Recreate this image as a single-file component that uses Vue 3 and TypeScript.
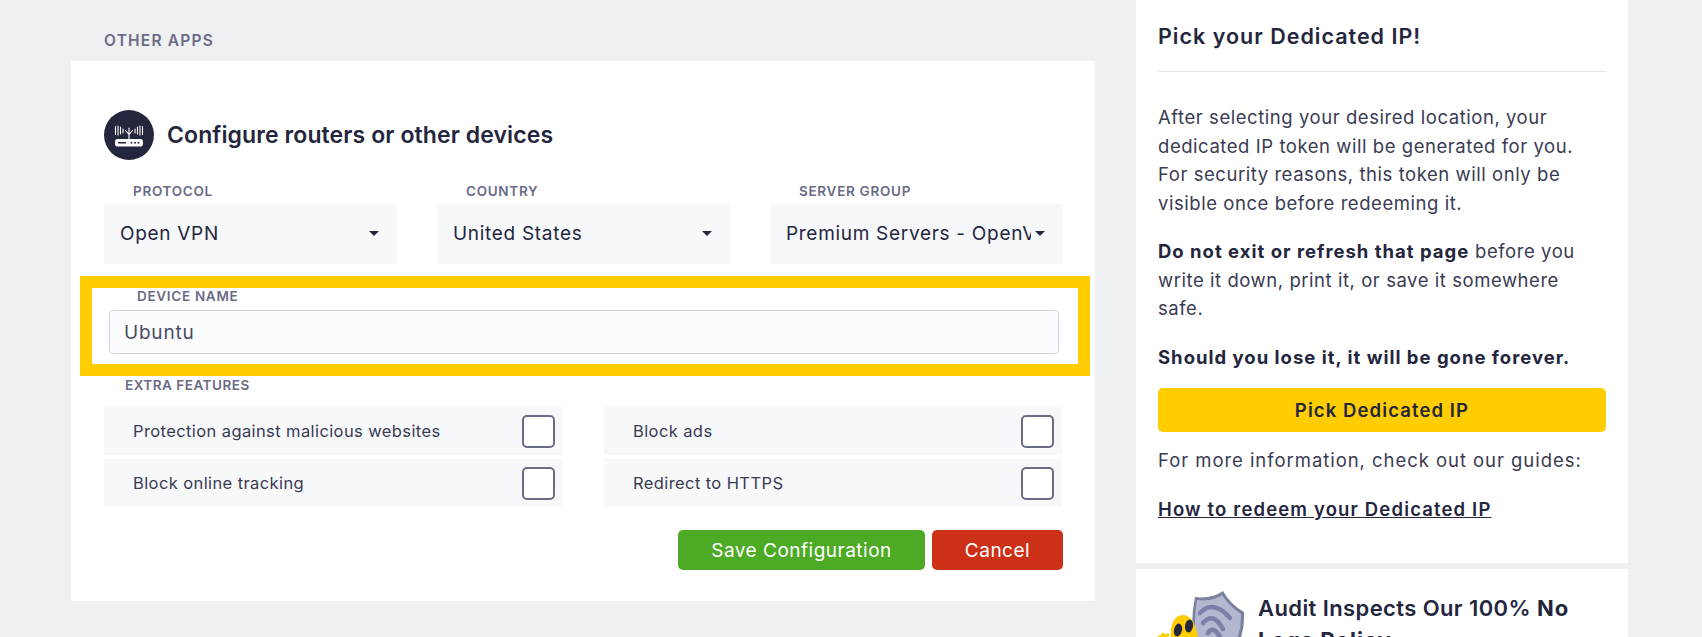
<script setup lang="ts">
import { ref } from 'vue'

const protocol = ref('Open VPN')
const country = ref('United States')
const serverGroup = ref('Premium Servers - OpenVPN')
const deviceName = ref('Ubuntu')

const selects = [
  { label: 'Protocol', model: protocol, options: ['Open VPN', 'IKEv2'] },
  { label: 'Country', model: country, options: ['United States', 'Germany'] },
  { label: 'Server Group', model: serverGroup, options: ['Premium Servers - OpenVPN'] },
]

const features = ref([
  { label: 'Protection against malicious websites', on: false },
  { label: 'Block ads', on: false },
  { label: 'Block online tracking', on: false },
  { label: 'Redirect to HTTPS', on: false },
])
</script>

<template>
  <div class="page">
    <main class="left">
      <h2 class="section-title">OTHER APPS</h2>
      <section class="card">
        <header class="card-head">
          <span class="round-icon">
            <svg viewBox="0 0 50 50" width="50" height="50" aria-hidden="true">
              <circle cx="25" cy="25" r="25" fill="#24263e" />
              <g fill="none" stroke="#fff" stroke-width="1.1" stroke-linecap="round">
                <path d="M11.5 16.5v8M14 16v9M16.5 17v7M19 19v4M31 19v4M33.5 17v7M36 16v9M38.5 16.5v8" />
                <path d="M25 18v11M21.5 20.5l3.5 4 3.5-4" />
              </g>
              <rect x="11" y="29" width="28" height="7.5" rx="2.8" fill="#fff" />
              <rect x="14" y="32" width="8" height="1.5" fill="#24263e" />
              <circle cx="27.5" cy="32.7" r="1" fill="#24263e" />
              <circle cx="31" cy="32.7" r="1" fill="#24263e" />
              <circle cx="34.5" cy="32.7" r="1" fill="#24263e" />
            </svg>
          </span>
          <h3 class="card-title">Configure routers or other devices</h3>
        </header>

        <div class="select-row">
          <div v-for="s in selects" :key="s.label" class="field">
            <label class="field-label">{{ s.label }}</label>
            <div class="select-wrap">
              <select v-model="s.model.value" class="select">
                <option v-for="o in s.options" :key="o">{{ o }}</option>
              </select>
            </div>
          </div>
        </div>

        <div class="highlight">
          <label class="field-label device-label">Device Name</label>
          <input v-model="deviceName" class="text-input" type="text" />
        </div>

        <div class="extra-label">Extra Features</div>
        <div class="feature-grid">
          <label v-for="f in features" :key="f.label" class="feature">
            <span>{{ f.label }}</span>
            <input v-model="f.on" type="checkbox" class="check" />
          </label>
        </div>

        <div class="actions">
          <button type="button" class="btn btn-save">Save Configuration</button>
          <button type="button" class="btn btn-cancel">Cancel</button>
        </div>
      </section>
    </main>

    <aside class="right">
      <section class="panel">
        <h3 class="panel-title">Pick your Dedicated IP!</h3>
        <p>
          After selecting your desired location, your dedicated IP token will be generated for you.
          For security reasons, this token will only be visible once before redeeming it.
        </p>
        <p><strong>Do not exit or refresh that page</strong> before you write it down, print it, or save it somewhere safe.</p>
        <p><strong>Should you lose it, it will be gone forever.</strong></p>
        <button type="button" class="btn-pick">Pick Dedicated IP</button>
        <p class="more">For more information, check out our guides:</p>
        <a class="guide" href="#">How to redeem your Dedicated IP</a>
      </section>

      <section class="panel audit">
        <svg class="mascot" viewBox="0 0 90 80" width="90" height="80" aria-hidden="true">
          <path d="M37 7 Q54 9 65 1 Q72 14 86 22 Q88 55 62 80 L40 80 Q30 40 37 7Z" fill="#7c809f" />
          <path d="M39 10 Q55 12 64 5 Q71 16 83 24 Q84 54 60 80 L44 80 Q33 42 39 10Z" fill="#b3b7d0" />
          <g fill="none" stroke="#7d7fa8" stroke-width="4.5" stroke-linecap="round">
            <path d="M42 23 Q55 9 72 28" />
            <path d="M45 33 Q55 21 65 39" />
            <path d="M50 43 Q55 35 62 47" />
          </g>
          <circle cx="58" cy="56" r="4" fill="#7d7fa8" />
          <path d="M13 50 Q11 26 25 25 Q36 25 40 48 L42 80 L16 80Z" fill="#ffcd00" />
          <ellipse cx="20" cy="40" rx="4" ry="6.5" fill="#24263e" transform="rotate(12 20 40)" />
          <ellipse cx="31" cy="36" rx="4" ry="6.5" fill="#24263e" transform="rotate(8 31 36)" />
          <path d="M1 47l9-2M5 44v10" stroke="#ffcd00" stroke-width="3" fill="none" stroke-linecap="round" />
        </svg>
        <h3 class="audit-title">Audit Inspects Our 100% <strong>No Logs Policy</strong></h3>
      </section>
    </aside>
  </div>
</template>

<style>
html,
body {
  margin: 0;
  background: #eff0f2;
}
</style>

<style scoped>
.page {
  display: flex;
  height: 637px;
  overflow: hidden;
  padding-left: 71px;
  background: #eff0f2;
  color: #24263e;
  font-family: Inter, 'Liberation Sans', sans-serif;
}

.left {
  width: 1024px;
  flex: none;
  padding-top: 31px;
}

.section-title {
  margin: 0 0 10px 33px;
  font-size: 15.5px;
  line-height: 20px;
  font-weight: 600;
  letter-spacing: 1.2px;
  color: #6a6b85;
}

.card {
  box-sizing: border-box;
  height: 540px;
  padding: 49px 32px 0 33px;
  background: #fff;
}

.card-head {
  display: flex;
  align-items: center;
  gap: 13px;
  margin-bottom: 21px;
}

.round-icon {
  display: flex;
}

.card-title {
  margin: 0;
  font-size: 23px;
  line-height: 48px;
  font-weight: 600;
  letter-spacing: 0.1px;
}

.select-row {
  display: grid;
  grid-template-columns: repeat(3, 1fr);
  gap: 40px;
}

.field-label {
  display: block;
  padding-left: 29px;
  margin-bottom: 3px;
  font-size: 13.5px;
  line-height: 20px;
  font-weight: 600;
  letter-spacing: 0.7px;
  color: #6a6b85;
  text-transform: uppercase;
}

.select-wrap {
  position: relative;
}

.select-wrap::after {
  content: '';
  position: absolute;
  top: 27px;
  right: 18px;
  border-top: 5px solid #24263e;
  border-left: 5px solid transparent;
  border-right: 5px solid transparent;
}

.select {
  display: block;
  box-sizing: border-box;
  width: 100%;
  height: 60px;
  padding: 0 32px 2px 16px;
  border: none;
  border-radius: 0;
  appearance: none;
  background: #f6f8fa;
  font: 400 19px Inter, 'Liberation Sans', sans-serif;
  letter-spacing: 0.7px;
  color: #24263e;
}

.highlight {
  box-sizing: border-box;
  height: 100px;
  margin: 12px -27px 0 -24px;
  padding: 0 19px 0 17px;
  border: 12px solid #ffcd00;
}

.device-label {
  padding-left: 28px;
  margin-bottom: 6px;
  line-height: 16px;
}

.text-input {
  display: block;
  box-sizing: border-box;
  width: 100%;
  height: 44px;
  padding: 0 14px;
  border: 1px solid #cfd0e4;
  border-radius: 4px;
  background: #fbfcfd;
  font: 400 19px Inter, 'Liberation Sans', sans-serif;
  letter-spacing: 0.8px;
  color: #4a4b63;
  outline: none;
}

.extra-label {
  margin: 0 0 13px 21px;
  font-size: 13.5px;
  line-height: 18px;
  font-weight: 600;
  letter-spacing: 0.5px;
  color: #6a6b85;
  text-transform: uppercase;
}

.feature-grid {
  display: grid;
  grid-template-columns: 459px 458px;
  column-gap: 41px;
  row-gap: 4px;
}

.feature {
  display: flex;
  align-items: center;
  justify-content: space-between;
  height: 48px;
  padding: 0 8px 0 29px;
  background: #f6f8fa;
  font-size: 16.5px;
  letter-spacing: 0.4px;
  color: #3a3b52;
}

.check {
  box-sizing: border-box;
  width: 33px;
  height: 33px;
  margin: 0;
  appearance: none;
  border: 2px solid #6a6b85;
  border-radius: 5px;
  background: #fff;
}

.actions {
  display: flex;
  justify-content: flex-end;
  gap: 7px;
  margin-top: 23px;
}

.btn {
  height: 40px;
  border: none;
  border-radius: 5px;
  color: #fff;
  font: 400 19px Inter, 'Liberation Sans', sans-serif;
  letter-spacing: 0.5px;
}

.btn-save {
  width: 247px;
  background: #4caa25;
}

.btn-cancel {
  width: 131px;
  background: #cc3118;
}

.right {
  width: 492px;
  flex: none;
  margin-left: 41px;
  display: flex;
  flex-direction: column;
  gap: 6px;
}

.panel {
  box-sizing: border-box;
  padding: 21px 22px 0;
  background: #fff;
  font-size: 18.5px;
  line-height: 28.5px;
  letter-spacing: 0.55px;
  color: #3a3b52;
  flex: none;
}

.panel:first-child {
  height: 563px;
}

.panel-title {
  margin: 0 0 31px;
  padding-bottom: 20px;
  border-bottom: 1px solid #e6e7ea;
  font-size: 21.5px;
  line-height: 30px;
  font-weight: 600;
  letter-spacing: 1px;
  color: #24263e;
}

.panel p {
  margin: 0 0 20px;
}

.panel strong {
  color: #24263e;
  font-weight: 700;
  letter-spacing: 1px;
}

.btn-pick {
  display: block;
  width: 100%;
  height: 44px;
  margin-top: -3px;
  border: none;
  border-radius: 5px;
  background: #ffcd00;
  color: #24263e;
  font: 600 18.5px Inter, 'Liberation Sans', sans-serif;
  letter-spacing: 1.1px;
}

.panel .more {
  margin: 14px 0 20px;
  letter-spacing: 0.95px;
}

.guide {
  font-weight: 600;
  letter-spacing: 1.15px;
  color: #24263e;
  text-decoration: underline;
}

.audit {
  display: flex;
  gap: 10px;
  align-items: flex-start;
  padding-top: 21px;
}

.mascot {
  flex: none;
}

.audit-title {
  margin: 2px 0 0;
  font-size: 22px;
  line-height: 32px;
  font-weight: 600;
  letter-spacing: 0.4px;
  color: #24263e;
}
</style>
